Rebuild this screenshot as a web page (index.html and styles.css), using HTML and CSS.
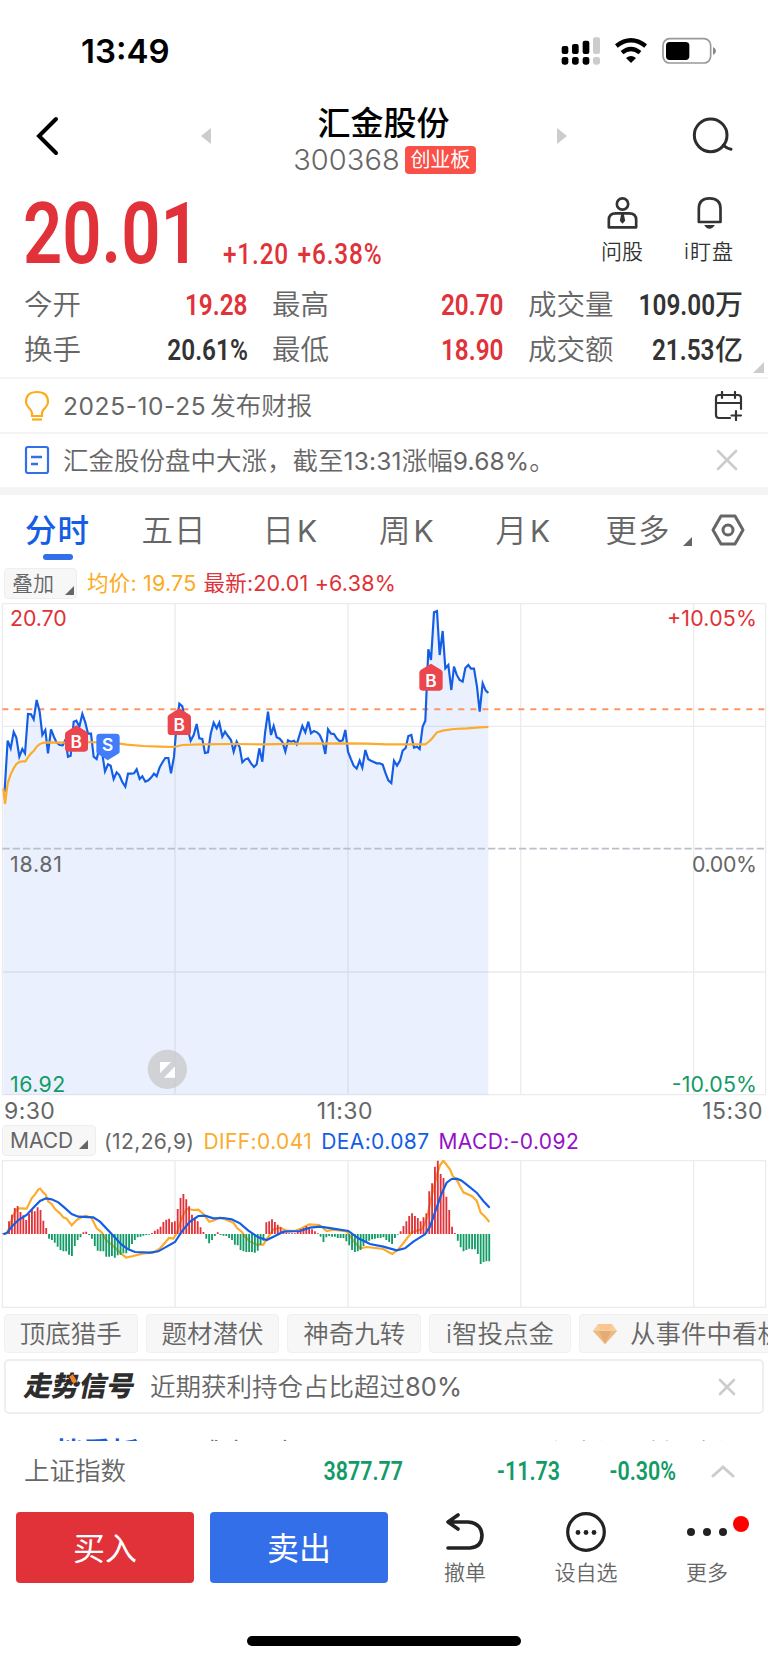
FILE: index.html
```html
<!DOCTYPE html>
<html lang="zh-CN">
<head>
    <meta charset="utf-8">
    <meta name="viewport" content="width=device-width, initial-scale=1">
    <title>汇金股份 300368</title>
    <link rel="stylesheet" href="styles.css">
</head>
<body>
<div class="status-bar">
    <span class="clock">13:49</span>
    <svg class="status-icons" viewBox="525 105 480 96" width="160" height="32">
        <g fill="#000">
            <rect x="533" y="138" width="20" height="24" rx="6"/>
            <rect x="564" y="132" width="20" height="30" rx="6"/>
            <rect x="596" y="122" width="20" height="40" rx="6"/>
            <rect x="533" y="171" width="20" height="23" rx="7"/>
            <rect x="564" y="171" width="20" height="23" rx="7"/>
            <rect x="596" y="171" width="20" height="23" rx="7"/>
        </g>
        <g fill="#ccc">
            <rect x="627" y="112" width="21" height="50" rx="6"/>
            <rect x="627" y="171" width="21" height="23" rx="7"/>
        </g>
        <path d="M697 138Q741 104 785 138M714 158Q741 136 768 158" fill="none" stroke="#000" stroke-width="13"/>
        <path d="M726 174Q741 162 756 174L741 189Z"/>
        <rect x="837" y="116" width="143" height="73" rx="20" fill="none" stroke="#999" stroke-width="5"/>
        <rect x="846" y="126" width="70" height="54" rx="11"/>
        <path d="M987 141Q996 145 996 153Q996 161 987 165Z" fill="#888"/>
    </svg>
</div>

<div class="header">
    <svg class="back" viewBox="0 0 24 40" width="24" height="40"><path d="M20 3L3 20L20 37" fill="none" stroke="#000" stroke-width="4" stroke-linecap="round"/></svg>
    <svg class="arrow-prev" viewBox="0 0 10 16" width="10" height="16"><path d="M10 0V16L0 8Z" fill="#ccc"/></svg>
    <div class="stock">
        <div class="stock-name">汇金股份</div>
        <div class="stock-code"><span>300368</span><span class="badge">创业板</span></div>
    </div>
    <svg class="arrow-next" viewBox="0 0 10 16" width="10" height="16"><path d="M0 0V16L10 8Z" fill="#ccc"/></svg>
    <svg class="search" viewBox="924 348 123 120" width="41" height="40" fill="none" stroke="#2d2d2d" stroke-width="9" stroke-linecap="round"><circle cx="980" cy="406" r="49"/><path d="M1018 436Q1030 446 1041 448"/></svg>
</div>

<div class="quote">
    <span class="price"><b class="din">20.01</b></span>
    <span class="change"><b class="din">+1.20 +6.38%</b></span>
    <div class="tool ask">
        <svg viewBox="665 15 98 105" width="33" height="35" fill="none" stroke="#333" stroke-width="8"><circle cx="714" cy="42" r="17"/><path d="M673 112V90Q673 70 694 70H734Q755 70 755 90V112Z" stroke-linejoin="round"/><path d="M710 72H718L722 92L714 101L706 92Z" fill="#333" stroke="none"/></svg>
        <span>问股</span>
    </div>
    <div class="tool watch">
        <svg viewBox="929 15 98 105" width="33" height="35" fill="none" stroke="#333" stroke-width="8"><path d="M946 96V56Q946 25 978 25Q1011 25 1011 56V96Z" stroke-linejoin="round"/><path d="M962 105H994Q988 116 978 116Q968 116 962 105Z" fill="#333" stroke="none"/></svg>
        <span>i盯盘</span>
    </div>
</div>

<div class="stats">
    <div class="stat"><span>今开</span><b class="din up">19.28</b></div>
    <div class="stat"><span>最高</span><b class="din up">20.70</b></div>
    <div class="stat"><span>成交量</span><b class="unit"><i class="din">109.00</i>万</b></div>
    <div class="stat"><span>换手</span><b class="din">20.61%</b></div>
    <div class="stat"><span>最低</span><b class="din up">18.90</b></div>
    <div class="stat"><span>成交额</span><b class="unit"><i class="din">21.53</i>亿</b></div>
    <i class="corner"></i>
</div>

<div class="notice">
    <svg class="notice-icon" viewBox="0 0 26 32" width="26" height="32" fill="none" stroke="#fcab1c" stroke-width="2.2"><path d="M8 26V23Q8 21 5 18Q2 15 2 12Q2 2 13 2Q24 2 24 12Q24 15 21 18Q18 21 18 23V26Z"/><path d="M8 29.5H18"/></svg>
    <span class="notice-text"><em class="date">2025-10-25</em>发布财报</span>
    <svg class="calendar" viewBox="0 0 30 30" width="30" height="30" fill="none" stroke="#333" stroke-width="2.2" stroke-linecap="round"><path d="M16 27H5Q2 27 2 24V7Q2 4 5 4H24Q27 4 27 7V18M2 12H27M8 1V7M21 1V7M22 20V29M17.500 24.500H27"/></svg>
</div>
<div class="notice">
    <svg class="notice-icon" viewBox="0 0 26 32" width="26" height="32" fill="none" stroke="#326fe8" stroke-width="2.2"><rect x="2" y="3" width="22" height="26" rx="2"/><path d="M7 13H18M7 20H14" stroke-width="2.600"/></svg>
    <span class="notice-text">汇金股份盘中大涨，截至<em>13:31</em>涨幅<em>9.68%</em>。</span>
    <svg class="close" viewBox="0 0 22 22" width="22" height="22"><path d="M2 2L20 20M20 2L2 20" stroke="#ccc" stroke-width="2.600" stroke-linecap="round"/></svg>
</div>

<div class="tabs">
    <span class="tab active">分时</span>
    <span class="tab">五日</span>
    <span class="tab">日<em>K</em></span>
    <span class="tab">周<em>K</em></span>
    <span class="tab">月<em>K</em></span>
    <span class="tab">更多</span>
    <i class="tri tab-tri"></i>
    <svg class="settings" viewBox="0 0 34 32" width="34" height="32" fill="none" stroke="#666" stroke-width="3" stroke-linejoin="round"><path d="M10 2H24L32 16L24 30H10L2 16Z"/><circle cx="17" cy="16" r="5"/></svg>
</div>

<div class="legend">
    <span class="pill overlay">叠加<i class="tri"></i></span>
    <span class="avg">均价: 19.75</span>
    <span class="last">最新:20.01 +6.38%</span>
</div>

<svg class="chart" viewBox="0 0 2304 1488" width="768" height="496">
    <path class="grid" d="M7 11H2297V1484H7ZM7 379H2297M7 1116H2297M525 11V1484M1044 11V1484M1562 11V1484M2081 11V1484"/>
    <polygon class="area" id="area"/>
    <path d="M7 746H2297" stroke="#babfca" stroke-width="5" stroke-dasharray="22 9"/>
    <path d="M7 328H2297" stroke="#fb9660" stroke-width="6" stroke-dasharray="18 18"/>
    <polyline class="price-line" id="priceLine"/>
    <polyline class="avg-line" points="10,565 15,612 23,550 32,523 41,505 49,492 58,486 67,484 76,484 84,472 93,460 101,453 110,440 118,433 127,429 140,427 190,428 270,426 360,431 380,434 430,438 480,440 522,441 535,438 547,435 600,433 700,432 790,433 900,431 1040,430 1100,431 1160,433 1276,433 1285,426 1293,419 1302,408 1311,397 1328,392 1362,387 1400,385 1440,382 1465,381"/>
    <g class="axis-text">
        <text x="30" y="77" textLength="170" fill="#e03238">20.70</text>
        <text x="30" y="817" textLength="156" fill="#666">18.81</text>
        <text x="30" y="1475" textLength="166" fill="#129b66">16.92</text>
        <text x="2001" y="77" textLength="270" fill="#e03238">+10.05%</text>
        <text x="2076" y="817" textLength="195" fill="#666">0.00%</text>
        <text x="2015" y="1475" textLength="256" fill="#129b66">-10.05%</text>
    </g>
    <g class="marks">
        <path d="M229 376L260 395Q264 398 264 403V445Q264 455 254 455H205Q195 455 195 445V403Q195 398 199 395Z" fill="#eb454d"/>
        <text x="229" y="444">B</text>
        <path d="M299 401H349Q359 401 359 411V455Q359 459 355 461L323 481L293 461Q289 459 289 455V411Q289 401 299 401Z" fill="#417dfb"/>
        <text x="323" y="452">S</text>
        <path d="M538 325L569 344Q573 347 573 352V395Q573 405 563 405H513Q503 405 503 395V352Q503 347 507 344Z" fill="#eb454d"/>
        <text x="538" y="392">B</text>
        <path d="M1293 191L1324 210Q1328 213 1328 218V262Q1328 272 1318 272H1268Q1258 272 1258 262V218Q1258 213 1262 210Z" fill="#eb454d"/>
        <text x="1293" y="261">B</text>
    </g>
    <circle cx="502" cy="1408" r="59" fill="#c8c8c8" fill-opacity=".75"/>
    <path d="M480 1386H513L480 1419ZM525 1399V1433H492Z" fill="#fff"/>
</svg>
<div class="times"><span>9:30</span><span>11:30</span><span>15:30</span></div>

<div class="macd-legend">
    <span class="pill macd-pill">MACD<i class="tri"></i></span>
    <span class="params">(12,26,9)</span>
    <span class="diff">DIFF:0.041</span>
    <span class="dea">DEA:0.087</span>
    <span class="macd">MACD:-0.092</span>
</div>
<svg class="chart" viewBox="0 360 2304 444" width="768" height="148">
    <path class="grid" d="M7 362H2297V802H7ZM525 362V802M1044 362V802M1562 362V802M2081 362V802"/>
    <polyline class="avg-line" points="10,582 20,580 27,565 40,525 50,508 60,505 80,506 95,475 105,463 115,448 121,446 130,458 137,464 145,485 155,492 165,507 180,520 190,532 200,536 215,556 230,540 240,534 258,527 275,534 290,565 305,577 320,602 340,618 360,638 378,653 400,648 430,640 460,638 480,625 495,608 507,594 520,596 530,580 545,535 560,506 580,510 595,509 610,522 628,545 645,540 660,532 680,540 700,548 712,565 725,575 735,590 750,605 770,614 790,614 800,598 820,568 840,563 860,572 885,573 905,565 928,553 958,555 980,573 1000,569 1040,574 1060,602 1080,625 1100,621 1150,627 1165,636 1177,642 1195,628 1215,603 1235,577 1250,572 1265,568 1275,550 1283,525 1290,490 1302,440 1312,400 1320,376 1330,362 1340,375 1350,388 1358,408 1370,420 1390,457 1415,468 1430,482 1442,518 1455,530 1468,546"/>
    <path id="barsUp" stroke="#e03238" stroke-width="5.500"/>
    <path id="barsDown" stroke="#129b66" stroke-width="5.500"/>
    <polyline class="price-line" points="10,583 22,578 35,560 55,540 80,525 100,503 120,483 138,475 155,478 175,487 190,500 215,522 235,530 280,532 300,545 335,582 365,614 385,628 405,636 450,638 475,634 500,620 525,606 545,575 570,545 595,528 615,527 640,535 670,534 695,538 720,550 745,572 775,592 800,600 825,588 850,575 900,573 930,563 960,560 1000,566 1045,573 1075,595 1110,612 1150,620 1190,631 1215,625 1240,605 1275,583 1290,560 1308,508 1325,460 1340,428 1355,417 1370,416 1385,422 1400,434 1430,458 1450,483 1469,503"/>
</svg>

<div class="chips">
    <span class="chip">顶底猎手</span>
    <span class="chip">题材潜伏</span>
    <span class="chip">神奇九转</span>
    <span class="chip chip-wide">i智投点金</span>
    <span class="chip chip-last">
        <svg viewBox="0 0 24 20" width="24" height="20"><path d="M5 0H19L24 7L12 20L0 7Z" fill="#f6cfa0"/><path d="M0 7H24L12 20Z" fill="#edb985"/><path d="M6 7H18L12 20Z" fill="#e5ab75"/><path d="M5 0H19L17 6H7Z" fill="#f9c78c"/></svg>
        从事件中看机会
    </span>
</div>
<div class="signal">
    <span class="signal-logo">走<span class="shi">势</span>信号</span>
    <span class="signal-text">近期获利持仓占比超过<em>80%</em></span>
    <svg class="signal-close" viewBox="0 0 18 18" width="18" height="18"><path d="M2 2L16 16M16 2L2 16" stroke="#ccc" stroke-width="2.600" stroke-linecap="round"/></svg>
</div>
<div class="subtabs">
    <span class="sub-active">五档看板</span>
    <span class="sub">成交明细</span>
    <span class="sub-link">升级大单</span>
    <span class="sub-link">拆分大单</span>
</div>

<div class="index-row">
    <span class="index-name">上证指数</span>
    <b class="din v1">3877.77</b>
    <b class="din v2">-11.73</b>
    <b class="din v3">-0.30%</b>
    <svg viewBox="0 0 24 14" width="24" height="14"><path d="M2 12L12 3L22 12" fill="none" stroke="#ccc" stroke-width="3" stroke-linecap="round"/></svg>
</div>
<div class="actions">
    <div class="btn buy">买入</div>
    <div class="btn sell">卖出</div>
    <div class="action">
        <svg viewBox="0 0 42 42" width="42" height="42" fill="none" stroke="#222" stroke-width="3.600" stroke-linecap="round" stroke-linejoin="round"><path d="M14 4L4 11L14 18M4 11H24Q37 12 38 24Q38 36 26 37H4"/></svg>
        <span>撤单</span>
    </div>
    <div class="action">
        <svg viewBox="0 0 42 42" width="42" height="42"><circle cx="21" cy="21" r="18.300" fill="none" stroke="#222" stroke-width="3.200"/><g fill="#222"><circle cx="13" cy="21.500" r="2.400"/><circle cx="21" cy="21.500" r="2.400"/><circle cx="29" cy="21.500" r="2.400"/></g></svg>
        <span>设自选</span>
    </div>
    <div class="action more">
        <svg viewBox="0 0 42 42" width="42" height="42" fill="#222"><circle cx="5" cy="21" r="4"/><circle cx="21" cy="21" r="4"/><circle cx="37" cy="21" r="4"/></svg>
        <span>更多</span>
        <i class="dot"></i>
    </div>
</div>
<div class="home-bar"></div>
<script src="chart.js"></script>
</body>
</html>
```
FILE: styles.css
```css
body {
    margin: 0;
    width: 768px;
    height: 1663px;
    overflow: hidden;
    background: #fff;
    color: #666;
    font-family: Inter, "Noto Sans CJK SC", sans-serif;
    font-weight: 350;
    line-height: 1;
}
em, i {
    font-style: normal;
}
em {
    font-weight: 400;
}
svg {
    display: block;
    flex: none;
}
span, b {
    white-space: nowrap;
}
.din {
    display: inline-block;
    font-family: Roboto, sans-serif;
    font-weight: 600;
    font-size: 29px;
    color: #333;
    transform: scaleX(.84);
    transform-origin: right center;
}
.stat .up {
    color: #e03238;
}

/* status bar */
.status-bar {
    display: flex;
    justify-content: space-between;
    height: 100px;
    padding: 0 49px 0 81px;
}
.clock {
    color: #000;
    font-size: 33px;
    font-weight: 600;
    line-height: 103px;
}
.status-icons {
    margin-top: 35px;
}

/* title */
.header {
    display: flex;
    align-items: flex-start;
    height: 86px;
}
.back {
    margin: 16px 0 0 36px;
}
.arrow-prev {
    margin: 28px 0 0 141px;
}
.stock {
    width: 345px;
    padding: 6px 2px 0 0;
    text-align: center;
}
.stock-name {
    color: #000;
    font-size: 33px;
    font-weight: 500;
    line-height: 34px;
}
.stock-code {
    display: flex;
    justify-content: center;
    align-items: center;
    gap: 5px;
    margin: 5px 0 0 2px;
    font-size: 29px;
    font-weight: 300;
    letter-spacing: .1px;
}
.badge {
    width: 71px;
    height: 28px;
    border-radius: 4px;
    background: #fa5048;
    color: #fff;
    font-size: 20px;
    font-weight: 400;
    line-height: 28px;
    letter-spacing: 0;
}
.arrow-next {
    margin: 28px 0 0 -1px;
}
.search {
    margin: 16px 0 0 125px;
}

/* price */
.quote {
    display: flex;
    height: 96px;
    padding-left: 23px;
}
.price {
    width: 200px;
}
.price .din {
    color: #e03238;
    font-size: 86px;
    line-height: 96px;
    transform: scaleX(.8);
    transform-origin: left center;
}
.change {
    width: 359px;
}
.change .din {
    color: #e03238;
    margin-top: 54px;
    font-weight: 500;
    letter-spacing: 1px;
    word-spacing: 2px;
    transform-origin: left center;
}
.tool {
    display: flex;
    flex-direction: column;
    align-items: center;
    gap: 11px;
    width: 80px;
    padding-top: 9px;
    color: #333;
    font-size: 21px;
}
.watch {
    width: 94px;
    letter-spacing: 1px;
}

.stats {
    display: grid;
    position: relative;
    grid-template-columns: 224px 232px 215px;
    column-gap: 24px;
    grid-auto-rows: 45px;
    height: 94px;
    padding: 1px 0 0 24px;
    border-bottom: 2px solid #f4f4f4;
}
.stat {
    display: flex;
    justify-content: space-between;
    align-items: center;
    font-size: 28.500px;
}
.unit {
    color: #333;
    font-size: 28px;
    font-weight: 500;
}
.corner {
    position: absolute;
    right: 4px;
    bottom: 4px;
    border-left: 11px solid transparent;
    border-bottom: 11px solid #ccc;
}

/* notices */
.notice {
    display: flex;
    align-items: center;
    box-sizing: border-box;
    height: 55px;
    padding: 0 24px;
    border-bottom: 2px solid #f4f4f4;
    font-size: 25.500px;
}
.notice-text {
    flex: 1;
    margin-left: 13px;
    padding-top: 1px;
}
.notice-text em {
    font-size: 24.500px;
    letter-spacing: .2px;
}
.notice-text .date {
    margin-right: 4px;
    letter-spacing: .6px;
}
.close {
    margin-right: 6px;
}
.notice + .notice {
    height: 61px;
    padding-bottom: 1px;
    border-bottom: 8px solid #f4f4f4;
}

/* period tabs */
.tabs {
    display: flex;
    align-items: flex-start;
    height: 72px;
    padding-left: 25px;
    font-size: 31.500px;
}
.tab {
    position: relative;
    box-sizing: border-box;
    width: 116.500px;
    padding-top: 20px;
    letter-spacing: 1px;
}
.tab em {
    margin-left: 2px;
    font-size: 30px;
}
.tab:nth-child(2) {
    width: 121px;
}
.tab:nth-child(5) {
    width: 110px;
}
.tab:nth-child(6) {
    width: 77px;
}
.active {
    color: #135ee5;
    font-weight: 500;
}
.active::after {
    content: "";
    position: absolute;
    left: 18px;
    top: 59px;
    width: 30px;
    height: 6px;
    border-radius: 3px;
    background: #326fe8;
}
.tri {
    display: inline-block;
    border-left: 9px solid transparent;
    border-bottom: 9px solid #666;
}
.tab-tri {
    margin-top: 42px;
}
.settings {
    margin: 19px 0 0 19px;
}

.legend {
    display: flex;
    align-items: center;
    height: 33px;
    padding-left: 4px;
    font-size: 21px;
}
.pill {
    display: flex;
    align-items: center;
    box-sizing: border-box;
    height: 31px;
    border: 1px solid #eee;
    border-radius: 4px;
    background: #f7f7f7;
}
.overlay {
    width: 73px;
    padding-left: 7px;
}
.overlay .tri {
    margin: 14px 0 0 11px;
}
.avg, .last {
    font-size: 21.500px;
    font-weight: 400;
    letter-spacing: .2px;
}
.avg {
    margin-left: 10px;
    color: #fcab1c;
}
.last {
    margin-left: 7px;
    color: #e03238;
}

/* charts */
.grid {
    fill: none;
    stroke: #ececee;
    stroke-width: 4;
}
.area {
    fill: #326fe8;
    fill-opacity: .1;
}
.price-line, .avg-line {
    fill: none;
    stroke-width: 6.5;
}
.price-line {
    stroke: #135ee5;
}
.avg-line {
    stroke: #fcab2a;
}
.axis-text {
    font-size: 64px;
    font-weight: 400;
}
.marks {
    font-size: 52px;
    font-weight: 600;
    fill: #fff;
    text-anchor: middle;
}
.times {
    display: flex;
    justify-content: space-between;
    height: 28px;
    padding: 0 5px 0 4px;
    font-size: 23px;
    font-weight: 400;
    line-height: 30px;
    letter-spacing: .4px;
}
.times span:nth-child(2) {
    margin-right: 64px;
    margin-left: -4px;
}
.macd-legend {
    display: flex;
    align-items: center;
    height: 36px;
    padding-left: 2px;
    font-size: 21px;
    font-weight: 400;
    letter-spacing: .4px;
}
.macd-legend > span {
    position: relative;
    top: -1px;
}
.macd-pill {
    width: 94px;
    margin: -2px 8px 0 0;
    padding-left: 7px;
    letter-spacing: 0;
}
.macd-pill .tri {
    margin: 8px 0 0 6px;
}
.diff {
    margin-left: 9px;
    color: #fcab2a;
}
.dea {
    margin-left: 9px;
    color: #135ee5;
}
.macd {
    margin-left: 9px;
    color: #9610c8;
}

/* strategy chips */
.chips {
    display: flex;
    gap: 8px;
    height: 45px;
    padding: 6px 0 0 4px;
    box-sizing: border-box;
    overflow: hidden;
}
.chip {
    flex: none;
    box-sizing: border-box;
    width: 133.700px;
    height: 39px;
    border: 1px solid #f0f0f0;
    border-radius: 4px;
    background: #f7f7f7;
    font-size: 25.500px;
    line-height: 38px;
    text-align: center;
}
.chip-wide {
    width: 142px;
}
.chip-last {
    display: flex;
    align-items: center;
    gap: 13px;
    width: 250px;
    padding-left: 13px;
}
.signal {
    display: flex;
    align-items: center;
    box-sizing: border-box;
    width: 760px;
    height: 55px;
    margin: 6px 0 0 4px;
    padding: 0 26px 0 19px;
    border: 2px solid #eee;
    border-radius: 5px;
    font-size: 25.500px;
}
.signal-logo {
    width: 125px;
    color: #2d2d2d;
    font-size: 27.500px;
    font-weight: 900;
    transform: skewX(-12deg);
}
.shi {
    position: relative;
}
.shi::after {
    content: "";
    position: absolute;
    left: 14px;
    top: 8px;
    width: 9px;
    height: 4px;
    background: #f58220;
    transform: rotate(50deg);
}
.signal-text {
    flex: 1;
}
.signal-text em {
    font-size: 25.500px;
}

/* only the top edge of this row shows above the bottom bar */
.subtabs {
    display: flex;
    height: 27px;
    padding: 25px 0 0 27px;
    box-sizing: border-box;
    overflow: hidden;
    font-size: 28px;
}
.sub-active {
    width: 173px;
    color: #135ee5;
    font-weight: 600;
}
.sub {
    width: 339px;
    font-size: 27px;
    line-height: 29px;
}
.sub-link {
    width: 122px;
    color: #135ee5;
    font-size: 22px;
    line-height: 24px;
}

/* bottom bar */
.index-row {
    display: flex;
    align-items: center;
    height: 60px;
    padding-left: 24px;
    font-size: 25.500px;
}
.index-row .din {
    padding-top: 1px;
    color: #129b66;
    font-size: 25.500px;
    text-align: right;
}
.index-name {
    width: 140px;
}
.v1 {
    width: 239px;
}
.v2 {
    width: 157px;
}
.v3 {
    width: 116px;
}
.index-row svg {
    margin-left: 35px;
}
.actions {
    display: flex;
    gap: 16px;
    height: 124px;
    padding: 11px 0 0 16px;
}
.btn {
    width: 178px;
    height: 71px;
    border-radius: 4px;
    color: #fff;
    font-size: 32px;
    font-weight: 400;
    line-height: 73px;
    text-align: center;
}
.buy {
    background: #e03238;
}
.sell {
    background: #326fe8;
}
.action {
    position: relative;
    display: flex;
    flex-direction: column;
    align-items: center;
    gap: 9px;
    width: 104px;
    margin-left: 9px;
    font-size: 21px;
}
.action + .action {
    margin-left: 1px;
}
.action svg {
    margin-top: -1px;
}
.dot {
    position: absolute;
    top: 4px;
    right: 10px;
    width: 16px;
    height: 16px;
    border-radius: 50%;
    background: #f00;
}
.home-bar {
    width: 274px;
    height: 10px;
    margin: 0 auto;
    border-radius: 5px;
    background: #000;
}
```
FILE: chart.js
```js
// minute prices, x,y in chart units
var line = "10,565 14,570 23,422 32,445 41,396 49,413 58,470 67,447 75,460 84,342 93,343 101,358 110,300 119,335 127,405 136,390 144,460 153,388 162,411 170,428 179,435 188,436 196,420 204,470 212,467 221,365 229,362 238,380 247,342 256,368 264,401 273,401 281,470 290,477 298,445 307,462 315,514 324,493 332,497 341,537 350,517 358,525 367,546 376,560 384,521 393,521 402,520 410,508 419,537 427,529 436,545 445,541 454,532 462,521 470,529 479,502 488,486 496,474 505,474 513,520 522,470 530,370 538,311 547,319 556,365 564,390 572,422 581,405 590,372 598,415 607,417 615,459 624,457 632,402 641,368 650,385 658,368 667,410 675,395 684,408 693,420 701,455 710,425 719,442 " +
"727,487 736,478 744,475 753,490 762,501 770,493 778,445 787,485 795,400 804,335 813,405 821,378 830,412 839,416 847,425 856,455 864,421 873,425 882,422 890,433 899,404 907,378 916,397 925,365 933,400 942,393 951,397 959,405 968,425 976,462 984,388 993,401 1002,402 1010,415 1019,424 1028,421 1036,390 1044,455 1053,478 1061,497 1070,506 1079,482 1087,503 1096,450 1105,478 1113,482 1130,490 1139,490 1148,494 1156,518 1165,541 1174,549 1182,482 1191,497 1200,482 1208,452 1217,444 1225,408 1234,405 1242,443 1251,440 1259,447 1268,380 1276,362 1285,148 1293,180 1302,37 1311,33 1319,165 1328,93 1336,205 1345,195 1354,270 1362,200 1370,224 1379,240 1388,245 1396,204 1405,195 1413,206 1422,206 1431,260 1439,335 1448,250 1457,271 1465,279";
document.getElementById("priceLine").setAttribute("points", line);
document.getElementById("area").setAttribute("points", "10,1484 " + line + " 1465,1484");

// MACD histogram
var bars = [3,3,38,58,78,84,66,56,42,60,72,68,80,72,40,18,-14,-18,-26,-38,-48,-52,-52,-62,-66,-36,-18,-10,5,7,-3,-14,-36,-50,-52,-52,-68,-68,-66,-71,-64,-62,-58,-58,-44,-30,-18,-10,-8,-5,-3,-2,3,10,14,22,36,43,46,35,38,75,108,120,104,83,58,48,38,20,6,-14,-28,-18,-6,5,-3,-5,-6,-12,-18,-32,-34,-48,-52,-54,-54,-54,-56,-50,-32,-20,35,38,44,36,28,20,8,4,2,2,2,8,14,18,24,20,14,8,2,-8,-24,-10,-6,-8,-8,-12,-12,-12,-22,-34,-48,-54,-52,-48,-36,-24,-20,-16,-14,-12,-12,-10,-18,-24,-30,-12,-2,8,24,38,54,62,54,48,38,50,62,128,152,202,220,180,168,112,72,22,3,-20,-40,-52,-48,-44,-46,-46,-60,-90,-84,-82,-82];
var up = "", down = "";
for (var i = 0; i < bars.length; i++) {
    var d = "M" + (10 + i * 8.575).toFixed(1) + " 582v" + (-bars[i]);
    if (bars[i] > 0) up += d; else down += d;
}
document.getElementById("barsUp").setAttribute("d", up);
document.getElementById("barsDown").setAttribute("d", down);
```
